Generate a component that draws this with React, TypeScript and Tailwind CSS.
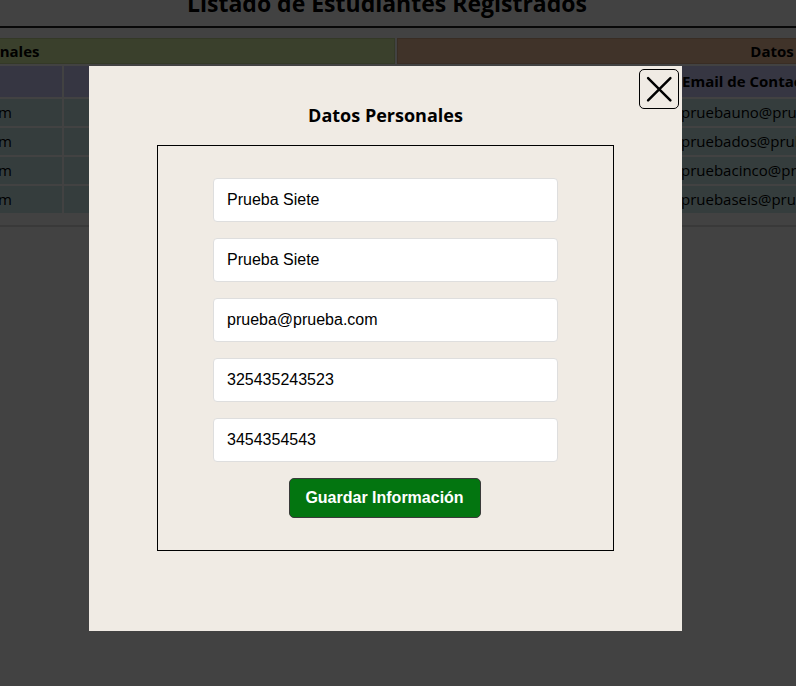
const estudiantes = [
  { nombre: 'pruebauno@gmail.com', email: 'pruebauno@pruba.com' },
  { nombre: 'pruebados@gmail.com', email: 'pruebados@pruba.com' },
  { nombre: 'pruebacinco@gmail.com', email: 'pruebacinco@prueba.com' },
  { nombre: 'pruebaseis@gmail.com', email: 'pruebaseis@prueba.com' },
]

const campos = ['Prueba Siete', 'Prueba Siete', 'prueba@prueba.com', '325435243523', '3454354543']

const encabezados = ['Documento', 'Email Personal', 'Nombre', 'Apellido', 'Teléfono', 'Celular', 'Email de Contacto', 'Acciones']

function Listado() {
  return (
    <div className="-mt-[13px] bg-white font-['Open_Sans',sans-serif] text-black">
      <h1 className="pr-[22px] text-center text-[23px] font-bold leading-[32px]">
        Listado de Estudiantes Registrados
      </h1>
      <div className="mt-[7px] border-t-2 border-[#222]" />
      <div className="flex justify-center pt-[8px] pb-[10px] border-b-2 border-[#ddd]">
        <table className="w-[1690px] shrink-0 table-fixed border-separate border-spacing-[2px] text-[15px]">
          <colgroup>
            <col className="w-[215px]" />
            <col className="w-[290px]" />
            <col className="w-[166px]" />
            <col className="w-[163px]" />
            <col className="w-[138px]" />
            <col className="w-[137px]" />
            <col className="w-[324px]" />
            <col className="w-[239px]" />
          </colgroup>
          <thead>
            <tr>
              <th colSpan={4} className="h-[26px] bg-[#dff6a9] text-center border border-[#c8dc98]">
                Datos Personales
              </th>
              <th colSpan={4} className="h-[26px] bg-[#f6c49e] text-center border border-[#dcae8c]">
                Datos de Contacto
              </th>
            </tr>
            <tr>
              {encabezados.map((h, i) => (
                <th
                  key={i}
                  className={
                    i === 6
                      ? 'h-[31px] bg-[#d0d0ff] text-left pl-[6px] whitespace-nowrap overflow-hidden'
                      : 'h-[31px] bg-[#d0d0ff] text-center whitespace-nowrap overflow-hidden'
                  }
                >
                  {h}
                </th>
              ))}
            </tr>
          </thead>
          <tbody>
            {estudiantes.map((e) => (
              <tr key={e.email}>
                <td className="h-[27px] bg-[#cbecec]" />
                <td className="bg-[#cbecec] text-right pr-[50px]">{e.nombre}</td>
                <td className="bg-[#cbecec]" />
                <td className="bg-[#cbecec]" />
                <td className="bg-[#cbecec]" />
                <td className="bg-[#cbecec]" />
                <td className="bg-[#cbecec] pl-[5px] whitespace-nowrap">{e.email}</td>
                <td className="bg-[#cbecec]" />
              </tr>
            ))}
          </tbody>
        </table>
      </div>
      <div className="h-[500px]" />
    </div>
  )
}

function Modal() {
  return (
    <div className="fixed inset-0 bg-black/[0.74] pt-[66px] pl-[89px]">
      <div className="relative w-[593px] h-[565px] bg-[#f0ebe4] flex flex-col items-center">
        <button className="absolute top-[3px] right-[3px] w-[40px] h-[40px] rounded-[5px] border border-black bg-transparent">
          <svg viewBox="0 0 40 40" className="w-full h-full">
            <line x1="8.5" y1="8.5" x2="32" y2="32" stroke="black" strokeWidth="2.6" strokeLinecap="round" />
            <line x1="32" y1="8.5" x2="8.5" y2="32" stroke="black" strokeWidth="2.6" strokeLinecap="round" />
          </svg>
        </button>
        <h2 className="mt-[36px] text-[18px] font-bold leading-[26px] font-['Open_Sans',sans-serif]">
          Datos Personales
        </h2>
        <form className="mt-[17px] w-[457px] border border-black flex flex-col items-center gap-[16px] pt-[32px] pb-[32px]">
          {campos.map((v, i) => (
            <input
              key={i}
              defaultValue={v}
              className="w-[345px] h-[44px] bg-white rounded-[4px] border border-[#dedede] px-[13px] text-[16px] text-black font-['Liberation_Sans',Arial,sans-serif] outline-none"
            />
          ))}
          <button
            type="button"
            className="-ml-[2px] w-[192px] h-[40px] rounded-[5px] bg-[#037510] border border-[#3a3a3a] text-white text-[16px] font-bold font-['Liberation_Sans',Arial,sans-serif]"
          >
            Guardar Información
          </button>
        </form>
      </div>
    </div>
  )
}

export default function App() {
  return (
    <div className="h-[686px] overflow-hidden">
      <Listado />
      <Modal />
    </div>
  )
}
